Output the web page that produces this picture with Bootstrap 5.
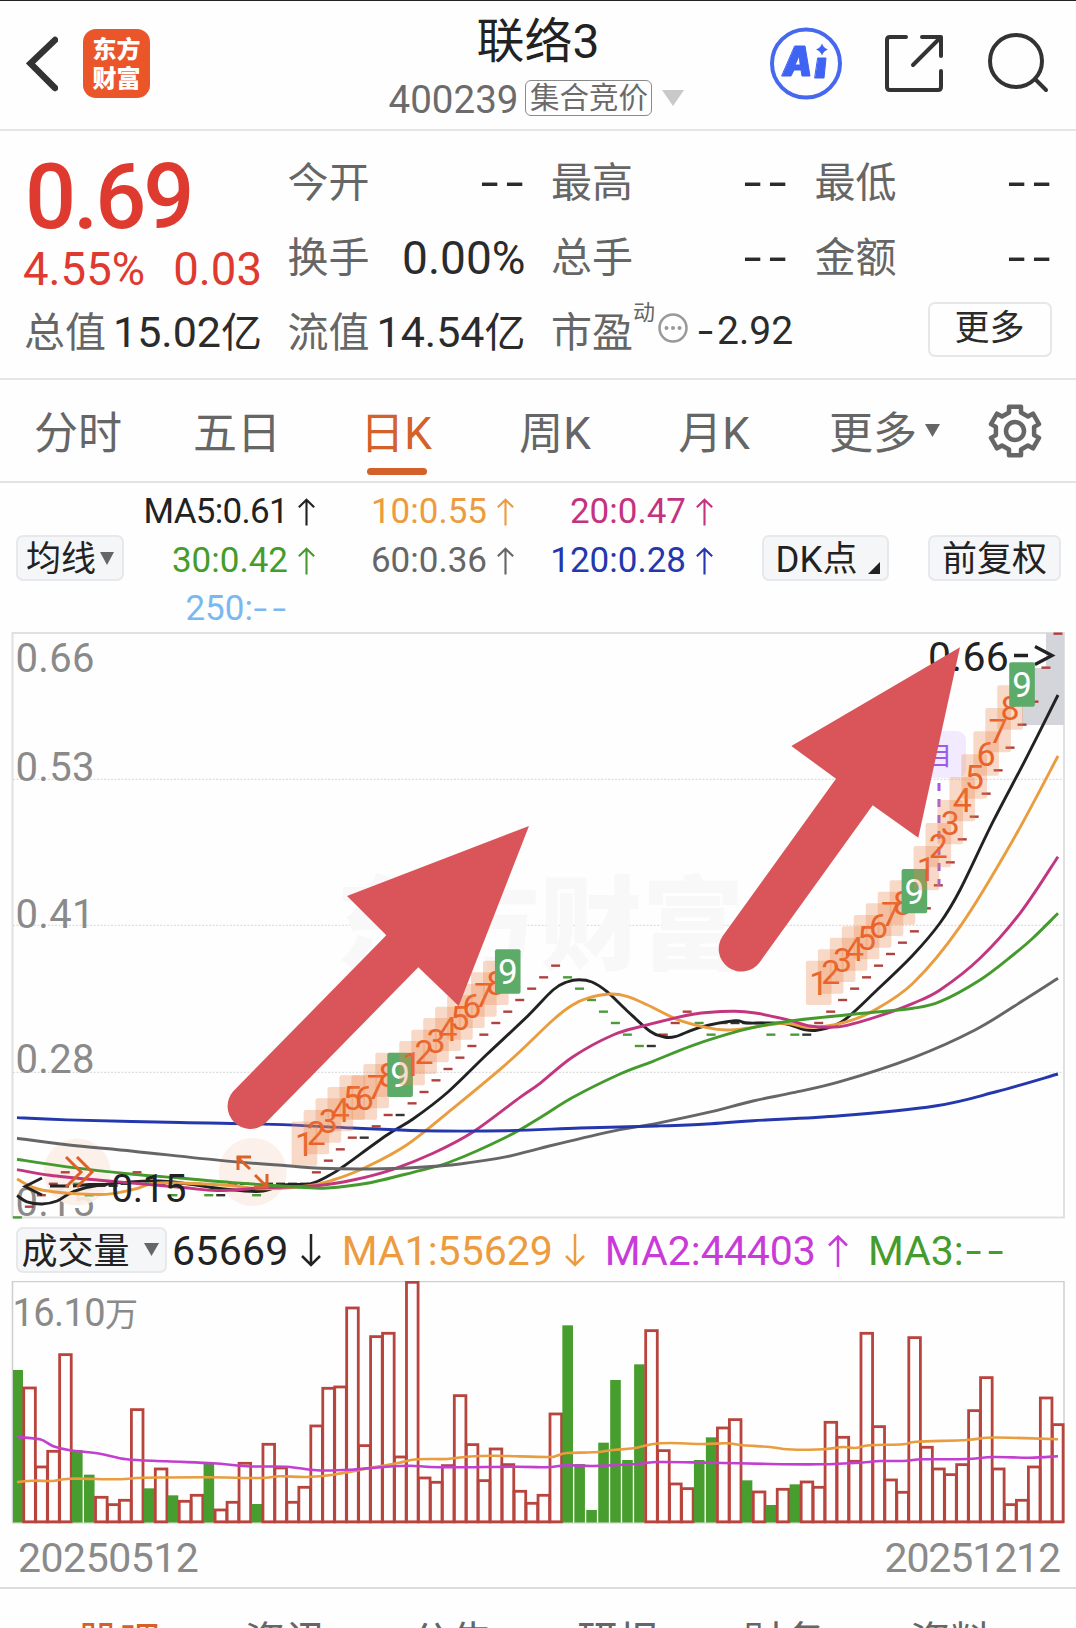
<!DOCTYPE html>
<html lang="zh-CN">
<head>
<meta charset="utf-8">
<meta name="viewport" content="width=device-width, initial-scale=1">
<title>联络3 400239</title>
<link href="https://cdn.jsdelivr.net/npm/bootstrap@5.3.0/dist/css/bootstrap.min.css" rel="stylesheet">
<style>
body{font-family:Roboto,"Noto Sans CJK SC",sans-serif;background:#fefefe;color:#2b2b2b;overflow:hidden;height:1628px}
.topbar{height:131px;border-top:1px solid #222;border-bottom:2px solid #e3e5e7}
.side{width:330px;flex:none}
.brand{width:67px;height:69px;border-radius:13px;background:#ea5529;color:#fff;font:900 24px/29px "Noto Sans CJK SC",sans-serif;margin:28px 0 0 25px;padding-top:4px;text-align:center}
.stock{font-size:48px;line-height:56px;margin-top:13px;color:#222}
.sub{height:36px;margin-top:10px;color:#6b6b6b;font-size:38.5px;line-height:36px;margin-left:-3px}
.tagbox{height:36px;width:127px;border:1.5px solid #8a8a8a;border-radius:6px;font-size:29.5px;line-height:34px;margin-left:7px;text-align:center;white-space:nowrap}
.quote{height:249px;border-bottom:2px solid #e3e5e7;padding:14px 27px 0 25px}
.qgrid{display:grid;grid-template-columns:repeat(4,237px);column-gap:26.5px;grid-auto-rows:75px}
.cell{display:flex;justify-content:space-between;align-items:center;font-size:46px;line-height:60px;white-space:nowrap}
.cell .lb{font-size:41px;color:#666;margin-left:-1px}
.cell .cj{font-size:41px}
.dd{display:inline-block;transform:scaleX(1.4);letter-spacing:.11em}
.nil{transform-origin:right;margin-right:-5px;position:relative;top:-1px}
.price{grid-row:span 2;color:#de3a2f}
.big{font-size:90px;font-weight:500;line-height:90px;letter-spacing:-3px;margin:8px 0 0 0}
.chg{font-size:45.5px;line-height:50px;display:flex;justify-content:space-between;margin:2px 0 0 -2px}
.pe{grid-column:3/5}
.morebtn{width:124px;height:55px;border:2px solid #e6e7e9;border-radius:7px;font-size:35px;line-height:49px;text-align:center;position:relative;left:-1px;margin-top:-7px}
.ktabs{height:103px;border-bottom:2px solid #e3e3e3;font-size:44px;color:#666}
.ktabs .kt{width:159px;text-align:center;line-height:60px;padding-top:24px;height:101px;flex:none;white-space:nowrap;text-indent:-3px}
.ktabs .on{color:#d4602a;position:relative}
.ktabs .on::after{content:"";position:absolute;left:49px;top:88px;width:60px;height:7px;border-radius:4px;background:#d4602a}
.mabar{height:149px;padding:4px 15px 0 16px}
.chip{background:#f5f6f8;border:2px solid #e6e8eb;border-radius:7px;height:46px;font-size:35px;line-height:42px;padding-top:4px;color:#222;white-space:nowrap;display:flex;justify-content:center;align-items:center}
.magrid{display:grid;grid-template-columns:191px 199px 199px;grid-auto-rows:48.5px;width:590px;font-size:35px;line-height:50px;flex:none;padding-top:1px}
.magrid>div{display:flex;justify-content:flex-end;align-items:center;white-space:nowrap}
svg{display:block}
.c-k{color:#222}.c-o{color:#ec9c3e}.c-m{color:#c4337f}.c-g{color:#459c2c}.c-s{color:#666}.c-b{color:#2437ac}.c-l{color:#7cb8f0}.c-p{color:#c93bd8}
.volbar{height:61px;padding-left:16px;font-size:41px;line-height:48px;white-space:nowrap;display:flex;align-items:center}
.dates{height:65px;padding:5px 16px 0 18px;color:#8a8a8a;font-size:41px;line-height:58px;border-bottom:2px solid #dcdcdc}
.foot{height:40px;overflow:hidden;font-size:41px;line-height:60px;color:#666;padding:23px 0 0 36px}
.foot>div{width:166.3px;text-align:center;flex:none}
</style>
</head>
<body>
<header class="topbar d-flex justify-content-between">
  <div class="side d-flex">
    <svg width="32" height="58" viewBox="0 0 32 58" style="margin:34px 0 0 26px"><path d="M29 5 4.500 28.500 29 53" fill="none" stroke="#333" stroke-width="6.500" stroke-linecap="round" stroke-linejoin="miter"/></svg>
    <div class="brand">东方<br>财富</div>
  </div>
  <div class="d-flex flex-column align-items-center">
    <div class="stock">联络3</div>
    <div class="sub d-flex align-items-center"><span style="padding-top:3px">400239</span><span class="tagbox">集合竞价</span>
      <svg width="22" height="16" style="margin-left:10px"><path d="M0 0h22L11 16z" fill="#c9c9c9"/></svg></div>
  </div>
  <div class="side">
    <svg width="330" height="120" viewBox="746 1 330 120" fill="none" stroke="#333" stroke-width="4" stroke-linecap="round" stroke-linejoin="round">
      <circle cx="806" cy="63.500" r="34" stroke="#4668ee" stroke-width="4"/>
      <path d="M795 46h10l5 30h-8l-1-6h-7l-3 6h-9zM799 56l-4 9h5z" fill="#3f63f2" fill-rule="evenodd" stroke="#3f63f2" stroke-width="1"/>
      <path d="M818 58h8l-2 20h-9z" fill="#3f63f2" stroke="#3f63f2" stroke-width="1"/>
      <path d="M822 43.500q1.500 4.500 6 6-4.500 1.500-6 6-1.500-4.500-6-6 4.500-1.500 6-6z" fill="#3f63f2" stroke="none"/>
      <path d="M906 37h-16q-3 0-3 3v47q0 3 3 3h48q3 0 3-3V71M922 37h19v19M939 39 913 65"/>
      <circle cx="1016" cy="61" r="26"/><path d="M1035 79l11 11"/>
    </svg>
  </div>
</header>

<section class="quote"><div class="qgrid">
  <div class="price"><div class="big">0.69</div><div class="chg"><span>4.55%</span><span>0.03</span></div></div>
  <div class="cell"><span class="lb">今开</span><span class="dd nil">--</span></div>
  <div class="cell"><span class="lb">最高</span><span class="dd nil">--</span></div>
  <div class="cell"><span class="lb">最低</span><span class="dd nil">--</span></div>
  <div class="cell"><span class="lb">换手</span><span>0.00%</span></div>
  <div class="cell"><span class="lb">总手</span><span class="dd nil">--</span></div>
  <div class="cell"><span class="lb">金额</span><span class="dd nil">--</span></div>
  <div class="cell"><span class="lb">总值</span><span style="font-size:43px">15.02<span class="cj">亿</span></span></div>
  <div class="cell"><span class="lb">流值</span><span style="font-size:43px">14.54<span class="cj">亿</span></span></div>
  <div class="cell pe"><div class="d-flex align-items-center"><span class="lb">市盈</span>
    <span style="font-size:22px;color:#666;align-self:flex-start;line-height:20px">动</span>
    <svg width="30" height="32" viewBox="0 0 30 32" style="margin:-9px 0 0 3px"><circle cx="15" cy="16" r="13.500" fill="none" stroke="#999" stroke-width="2.500"/><g fill="#999"><circle cx="8.500" cy="16" r="2"/><circle cx="15" cy="16" r="2"/><circle cx="21.500" cy="16" r="2"/></g></svg>
    <span style="font-size:39px;margin-left:13px;margin-top:-3px"><span class="dd">-</span><span style="margin-left:1px">2.92</span></span></div>
    <div class="morebtn">更多</div></div>
</div></section>

<nav class="ktabs d-flex">
  <div class="kt">分时</div><div class="kt">五日</div><div class="kt on">日K</div><div class="kt">周K</div><div class="kt">月K</div>
  <div class="kt d-flex justify-content-center" style="padding-left:23px">更多<svg width="15" height="13" style="margin:20px 0 0 8px"><path d="M0 0h15L7.500 13z" fill="#666"/></svg></div>
  <svg width="56" height="56" viewBox="-28 -28 56 56" style="margin:23px 0 0 33px" fill="none" stroke="#666" stroke-width="4.500" stroke-linejoin="round"><path id="gear"/><circle r="9"/></svg>
</nav>

<section class="mabar d-flex">
  <div class="chip" style="width:108px;margin-top:48px;flex:none">均线<svg width="14" height="13" style="margin:-4px 0 0 4px"><path d="M0 0h14L7 13z" fill="#666"/></svg></div>
  <div class="magrid" id="magrid"></div>
  <div class="chip ms-auto" style="width:127px;margin-top:48px;flex:none;padding-left:5px"><span style="font-size:36.500px">DK</span>点<svg width="12" height="12" style="margin:16px 0 0 11px"><path d="M12 0v12H0z" fill="#222"/></svg></div>
  <div class="chip" style="width:133px;margin:48px 0 0 39px;flex:none">前复权</div>
</section>

<svg id="kchart" width="1076" height="588" viewBox="0 632 1076 588" font-family="Roboto,'Noto Sans CJK SC',sans-serif"></svg>

<section class="volbar">
  <div class="chip" style="width:151px;font-size:36px;margin-top:-2px;padding-right:3px">成交量<svg width="15" height="13" style="margin:-4px 0 0 14px"><path d="M0 0h15L7.500 13z" fill="#666"/></svg></div>
  <span class="c-k" style="margin-left:5px;letter-spacing:.3px">65669</span><i data-ar="d" class="c-k"></i>
  <span class="c-o" style="margin-left:21px">MA1:55629</span><i data-ar="d" class="c-o"></i>
  <span class="c-p" style="margin-left:20px">MA2:44403</span><i data-ar="u" class="c-p"></i>
  <span class="c-g" style="margin-left:20px">MA3:<span class="dd" style="margin-left:8px">--</span></span>
</section>
<svg id="vchart" width="1076" height="243" viewBox="0 1281 1076 243" font-family="Roboto,'Noto Sans CJK SC',sans-serif"></svg>
<div class="dates d-flex justify-content-between"><span style="letter-spacing:-.5px">20250512</span><span style="letter-spacing:-1.100px">20251212</span></div>
<div class="foot d-flex"><div style="color:#d4602a">股吧</div><div>资讯</div><div>公告</div><div>研报</div><div>财务</div><div>资料</div></div>

<script>
// gear outline
(function(){const p=[];for(let k=0;k<6;k++){[[-18,19.5],[-14,25],[14,25],[18,19.5]].forEach(a=>{const t=(k*60-90+a[0])*Math.PI/180;p.push((a[1]*Math.cos(t)).toFixed(1)+' '+(a[1]*Math.sin(t)).toFixed(1));});}
document.getElementById('gear').setAttribute('d','M'+p.join('L')+'z');})();
const arrow=(d,w,h,ml)=>`<svg width="${w}" height="${h}" viewBox="0 0 20 34" style="margin-left:${ml}px;flex:none" fill="none" stroke="currentColor" stroke-width="2.500"><path d="${d==='u'?'M10 33V2M1 11.500 10 2.500l9 9':'M10 0v31M1 22l9 9 9-9'}"/></svg>`;
document.querySelectorAll('[data-ar]').forEach(e=>e.innerHTML=arrow(e.dataset.ar,20,36,12));
document.getElementById('magrid').innerHTML=[['k','MA5:0.61'],['o','10:0.55'],['m','20:0.47'],['g','30:0.42'],['s','60:0.36'],['b','120:0.28'],['l','250:']].map(a=>
 `<div class="c-${a[0]}"><span${a[0]==='k'?' style="letter-spacing:-.7px"':''}>${a[1]}${a[0]==='l'?'<span class="dd" style="margin:0 4px 0 6px">--</span>':''}</span>${a[0]==='l'?'<span style="width:25px"></span>':arrow('u',17,32,10)}</div>`).join('');

const X=i=>17.4+11.96*i;
const spline=(a)=>{let d=`M${a[0][0]} ${a[0][1]}`;for(let i=0;i<a.length-1;i++){const p0=a[i-1]||a[i],p1=a[i],p2=a[i+1],p3=a[i+2]||p2;
 d+=`C${(p1[0]+(p2[0]-p0[0])/6).toFixed(1)} ${(p1[1]+(p2[1]-p0[1])/6).toFixed(1)} ${(p2[0]-(p3[0]-p1[0])/6).toFixed(1)} ${(p2[1]-(p3[1]-p1[1])/6).toFixed(1)} ${p2[0]} ${p2[1]}`;}return d;};
const pts=s=>s.trim().split(/\s+/).map(q=>q.split(',').map(Number));
const line=(s,c,w=2.9)=>`<path d="${spline(pts(s))}" fill="none" stroke="${c}" stroke-width="${w}"/>`;

// closing prices, placed as y levels
const P={},R='#b0423e',G='#4d9a38',K='#333';
const put=(i,y,c)=>P[i]=[y,c];
put(0,1217.4,G);put(1,1206.7,R);put(2,1195.2,R);put(3,1183.8,R);put(4,1172.3,R);put(5,1183.8,G);put(6,1195.2,G);put(7,1185.8,K);put(8,1185.8,K);
put(9,1183.8,K);put(10,1172.3,R);put(11,1183.8,G);put(12,1183.8,K);put(13,1195.2,G);put(14,1183.8,R);put(15,1183.8,K);put(16,1195.2,G);put(17,1195.2,K);
put(18,1183.8,R);put(19,1183.8,K);put(20,1195.2,G);for(let i=21;i<25;i++)put(i,1183.8,K);
[757,722,688,653,653,619,585,585,550,516,481,447,413,378,344,309,275,240,206,172,137,172,206,240,275,309,344,378,378,344,309,275,309,344,309,309,309,309,344,309,344,344,309].forEach((y,k)=>{
 const i=25+k;put(i,920+y/3,(i===29||i===32||i===53||i===66||(i>59&&i<63))?K:((i>45&&i<53)||i===57||i===58||i===63||i===65)?G:R);});
[1145,1110,1076,1042,1007,972,938,904,835,766,697,628,560,491,421,353,284,215,113,11].forEach((y,k)=>put(68+k,630+y/3,R));

let s='<rect x="12.500" y="633" width="1051.500" height="584.500" fill="none" stroke="#e0e0e0" stroke-width="2"/>';
[779.3,925.4,1072.4].forEach(y=>s+=`<path d="M13 ${y}H1063" stroke="#dedede" stroke-width="1.200" stroke-dasharray="2 1.500"/>`);
s+='<text x="540" y="962" text-anchor="middle" font-size="102" font-weight="900" fill="#f8f8f8">东方财富</text>';
s+='<path d="M1046 633h18v92h-42v-57h24z" fill="#d3d5db"/>';
[['0.66',671.5],['0.53',780.5],['0.41',927.5],['0.28',1073],['0.15',1216]].forEach(a=>s+=`<text x="15.500" y="${a[1]}" font-size="40" fill="#8a8a8a" letter-spacing=".3">${a[0]}</text>`);
s+='<circle cx="77" cy="1172" r="33.500" fill="#fcefe8" opacity=".9"/><circle cx="252.700" cy="1172" r="34" fill="#fcefe8" opacity=".9"/>';
for(const i in P)s+=`<rect x="${X(+i)-4.5}" y="${P[i][0]-1.2}" width="9" height="2.400" fill="${P[i][1]}"/>`;
s+=line('17,1195.6 27,1201.8 42,1204 57,1201 73,1191.8 100,1185 160,1181 220,1188.500 260,1191.4 283,1185 310,1183.8 330,1175 343,1166.7 387,1135 413,1119 448,1092 487,1054.3 527,1016.7 553,990 567,982 579,979.7 592,982 607,991.7 627,1010.7 650,1031.3 663,1036.7 675,1036.7 700,1027.3 735,1020.7 747,1023 783,1023.3 803,1029.3 818,1030 843,1021 877,990 913,955 940,923 960,890 993,821.7 1027,756.7 1058,695','#222');
s+=line('17,1179.2 43,1190.3 100,1194.5 133,1189.5 153,1183.4 180,1183 233,1185.7 260,1188.7 307,1186 333,1180 367,1166.7 407,1144.7 453,1108.3 507,1063.3 553,1020 573,1004.7 587,998.3 610,994 627,996.3 647,1004.7 677,1019.3 707,1027.7 727,1030 747,1028.3 783,1023.3 807,1027.3 827,1026 847,1021.7 873,1011 913,983.3 960,926.7 1013,840 1058,756','#e99d3f');
s+=line('17,1169.6 50,1175.3 100,1180.3 180,1187.2 217,1190.6 267,1187.6 317,1185.7 353,1180 393,1169.3 433,1153.3 473,1132 520,1097.3 540,1083.3 573,1056.7 613,1035 643,1026 693,1014.3 733,1011.3 757,1013.3 787,1019.7 810,1026 830,1027.3 847,1025.3 880,1015.7 913,1003.3 940,990 980,958.3 1020,913.3 1058,856.7','#c2357f');
s+=line('17,1159.3 67,1166.9 133,1174.2 180,1178 233,1182.6 300,1187.2 327,1188 367,1183.3 413,1172.3 450,1162 507,1136.7 540,1117.7 573,1097.3 620,1074 653,1061.3 693,1045.3 740,1030.7 767,1024.7 800,1019.7 863,1013.3 913,1008.3 940,1001.7 980,980 1013,955 1033,938 1058,913.3','#459a2d');
s+=line('17,1138.2 67,1144.7 133,1151.2 220,1160.4 287,1165.8 320,1168.3 370,1169 420,1167.3 460,1164 507,1156.7 540,1148.3 607,1132.3 657,1123.3 707,1112.7 753,1101 793,1092.7 840,1081.7 914,1057.3 975,1030 1026.7,998.3 1058,978.3','#666');
s+=line('17,1117.6 67,1119.9 180,1122.5 273,1124.4 353,1128 420,1130.7 507,1130.7 580,1128 657,1126 707,1124 753,1120.7 840,1115.7 935,1106 997,1091.5 1058,1074','#2437ac');
s+='<g font-size="41" fill="#222"><text x="928" y="670.500" letter-spacing=".3">0.66</text><path d="M1014 655.500h14M1035 646.500l17 9-17 9" fill="none" stroke="#222" stroke-width="3.300"/><text x="111" y="1202" font-size="39.500" letter-spacing="-.5">0.15</text><path d="M42 1178 25 1186.500l17 8.500M50 1186h19M73 1186l16-1.500h18" fill="none" stroke="#222" stroke-width="2.800"/></g>';
s+='<g fill="none" stroke="#dc6028" stroke-width="3"><path d="M66 1157l15 15-15 15M77 1157l15 15-15 15M238 1170v-13h13M237 1157l13 12M255 1175l12 12M267 1174v13h-13"/></g>';
// purple marker
s+='<rect x="914" y="731" width="52" height="47" rx="9" fill="#f2eafe"/><text x="938" y="765" font-size="28" text-anchor="middle" fill="#9b5cea">自</text><path d="M939 783v103" stroke="#9b5cea" stroke-width="3" stroke-dasharray="8 8"/>';
// nine-turn counters
const box=(i,n)=>{const y=P[i][0]-62.3,x=X(i)-12.8,g=n===9;return `<rect x="${x}" y="${y}" width="25.600" height="44.300" rx="2" fill="${g?'#5dab69':'#ec8548'}" ${g?'':'fill-opacity=".3"'}/><text x="${X(i)}" y="${y+34.500}" font-size="${g?35:34}" text-anchor="middle" fill="${g?'#fff':'#ea6129'}">${n}</text>`;};
[24,33,67,76].forEach(b=>{for(let n=1;n<10;n++)s+=box(b+n-1,n);});
// hand-drawn arrows
s+='<g fill="#da555a"><path d="M529 826 347 896l39.300 39.300L233 1091.500a22.700 22.700 0 0 0 32 32L418.300 967.300 458.700 1006z"/><path d="M960 647.300 791.300 746 836 778.700 722.700 936a22.700 22.700 0 0 0 36.700 26.700L872.700 805.300 918.300 837.700z"/></g>';
document.getElementById('kchart').innerHTML=s;

const V='g480 530 767 720 430 g720 g794 858 880 867 595 g835 773 g856 870 852 g762 896 873 756 g882 699 770 873 828 644 531 527 290 703 376 366 737 213 800 813 763 553 700 808 713 760 840 876 852 608 g346 g762 g900 g698 g510 g750 g463 358 718 818 832 g750 g682 650 625 g811 842 g885 834 g823 812 828 633 678 750 366 646 806 843 379 708 773 790 760 598 499 773 880 867 767 560 640'.split(' ');
let v='<path d="M12.500 1523V1281.500H1064V1523" fill="none" stroke="#cfcfcf" stroke-width="1.500"/><path d="M12 1523H1064" stroke="#ddd" stroke-width="1.500"/><text x="12.500" y="1325.500" font-size="38" letter-spacing="-.6" fill="#8a8a8a">16.10<tspan font-size="33">万</tspan></text>';
V.forEach((t,i)=>{const g=t[0]==='g',y=1210+(+t.replace('g',''))/3;
 v+=g?`<rect x="${Math.max(13,X(i)-5.2)}" y="${y}" width="${i?10.6:10}" height="${1522.5-y}" fill="#479d2d"/>`:`<rect x="${X(i)-5.6}" y="${y+1.3}" width="${i===87?10.8:11.6}" height="${1521.8-y-1.3}" fill="none" stroke="#b8443e" stroke-width="2.800"/>`;});
const cv=(o,t)=>t.trim().split(/\s+/).map(q=>{const a=q.split(',');return (o+a[0]/3).toFixed(1)+','+(1210+a[1]/3).toFixed(1)}).join(' ')+' ';
v+=line(cv(0,'51,816 100,812 160,813 210,806 360,808 430,803 620,802 780,804 840,799 920,801 1000,794')+cv(350,'70,772 140,760 200,748 290,747 350,740 430,737 590,741 620,737 650,729 730,727 790,720 850,715 910,702 960,699 1060,702')+cv(710,'50,700 100,706 180,711 220,717 280,719 340,718 400,711 435,714 480,706 580,703 620,695 770,690 830,683 900,683 1044,688'),'#e99d3f',2.6);
v+=line(cv(0,'51,681 120,688 160,709 210,721 300,731 380,748 500,754 640,760 740,769 860,770 950,781')+cv(350,'0,779 100,771 180,767 270,772 500,770 590,772 650,766 730,768 850,763 920,756')+cv(710,'0,758 180,762 330,763 450,758 510,753 580,753 640,748 770,747 850,741 960,743 1044,739'),'#c33fcf',2.6);
document.getElementById('vchart').innerHTML=v;
</script>
<script src="https://cdn.jsdelivr.net/npm/bootstrap@5.3.0/dist/js/bootstrap.bundle.min.js"></script>
</body>
</html>
